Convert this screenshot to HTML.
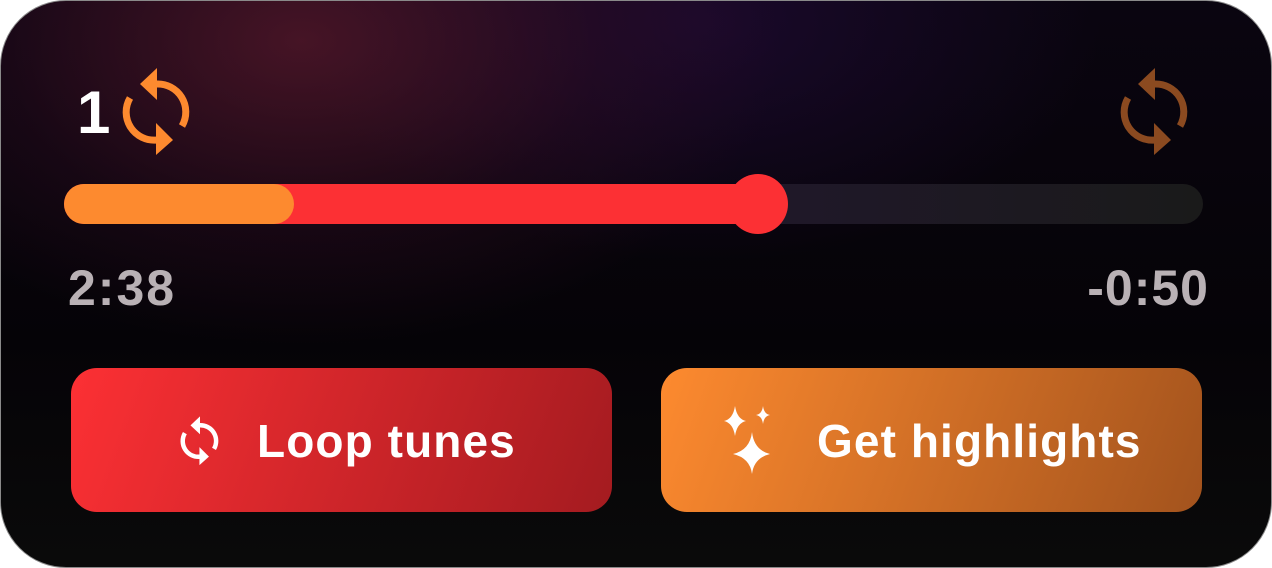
<!DOCTYPE html>
<html><head><style>
html,body{margin:0;padding:0;background:#fff;width:1272px;height:568px;overflow:hidden}
.card{position:absolute;left:0;top:0;width:1272px;height:568px;box-sizing:border-box;border-radius:66px;border:1px solid #8a8a8a;overflow:hidden;
background:
radial-gradient(ellipse 600px 380px at 300px 40px, rgba(90,25,45,.75), rgba(60,15,40,.3) 50%, transparent 80%),
radial-gradient(ellipse 500px 300px at 700px 20px, rgba(30,10,50,.8), transparent 80%),
linear-gradient(180deg,#0a0510,#050307 60%,#0a0a0a);}
.in{position:absolute;left:-1px;top:-1px;width:1272px;height:568px}
.t{position:absolute;font-family:"Liberation Sans",sans-serif;font-weight:bold}
.track{position:absolute;left:64px;top:184px;width:1139px;height:40px;border-radius:20px;background:linear-gradient(90deg,#2a1a30,#1f1828 65%,#1a1a1a)}
.red{position:absolute;left:64px;top:184px;width:700px;height:40px;border-radius:20px;background:#fc3034}
.or{position:absolute;left:64px;top:184px;width:230px;height:40px;border-radius:20px;background:#fd8a2f}
.knob{position:absolute;left:728px;top:174px;width:60px;height:60px;border-radius:50%;background:#fc3034}
.btn{position:absolute;top:368px;height:144px;width:541px;border-radius:26px}
</style></head><body>
<div class="card"><div class="in">
<div class="t" style="left:77px;top:78px;font-size:60px;color:#fff">1</div>
<svg style="position:absolute;left:119px;top:62px" width="76" height="100" viewBox="119 62 76 100">
<path d="M156 84 A28 28 0 0 1 182 126" fill="none" stroke="#fd8a2f" stroke-width="7"/>
<path d="M157 140 A28 28 0 0 1 130 98" fill="none" stroke="#fd8a2f" stroke-width="7"/>
<path d="M157 68 L157 100 L140 84Z" fill="#fd8a2f"/>
<path d="M156 123 L156 155 L173 140Z" fill="#fd8a2f"/>
</svg>
<svg style="position:absolute;left:1117px;top:62px" width="76" height="100" viewBox="119 62 76 100">
<path d="M156 84 A28 28 0 0 1 182 126" fill="none" stroke="#8b4a20" stroke-width="7"/>
<path d="M157 140 A28 28 0 0 1 130 98" fill="none" stroke="#8b4a20" stroke-width="7"/>
<path d="M157 68 L157 100 L140 84Z" fill="#8b4a20"/>
<path d="M156 123 L156 155 L173 140Z" fill="#8b4a20"/>
</svg>
<div class="track"></div><div class="red"></div><div class="or"></div><div class="knob"></div>
<div class="t" style="left:68px;top:259px;font-size:50px;letter-spacing:2px;color:#b9b1b5">2:38</div>
<div class="t" style="right:63px;top:259px;font-size:50px;letter-spacing:1px;color:#b9b1b5">-0:50</div>
<div class="btn" style="left:71px;background:linear-gradient(110deg,#fc3034,#a41b20)"></div>
<div class="btn" style="left:661px;background:linear-gradient(110deg,#fd8a2f,#a3531d)"></div>
<svg style="position:absolute;left:175px;top:413px" width="50" height="56" viewBox="119 62 76 100">
<path d="M156 84 A28 28 0 0 1 182 126" fill="none" stroke="#fff" stroke-width="8"/>
<path d="M157 140 A28 28 0 0 1 130 98" fill="none" stroke="#fff" stroke-width="8"/>
<path d="M157 68 L157 100 L140 84Z" fill="#fff"/>
<path d="M156 123 L156 155 L173 140Z" fill="#fff"/>
</svg>
<div class="t" style="left:257px;top:414px;font-size:46px;letter-spacing:1.1px;color:#fff">Loop tunes</div>
<svg style="position:absolute;left:722px;top:406px" width="60" height="70" viewBox="0 0 60 70">
<path d="M13 0 Q15 13 24 15 Q15 17 13 30 Q11 17 2 15 Q11 13 13 0Z" fill="#fff"/>
<path d="M41 0 Q42 8 48 9 Q42 10 41 18 Q40 10 34 9 Q40 8 41 0Z" fill="#fff"/>
<path d="M30 26 Q32 44 48 48 Q32 52 30 68 Q28 52 11 48 Q28 44 30 26Z" fill="#fff"/>
</svg>
<div class="t" style="left:817px;top:414px;font-size:46px;letter-spacing:1.1px;color:#fff">Get highlights</div>
</div></div>
</body></html>
